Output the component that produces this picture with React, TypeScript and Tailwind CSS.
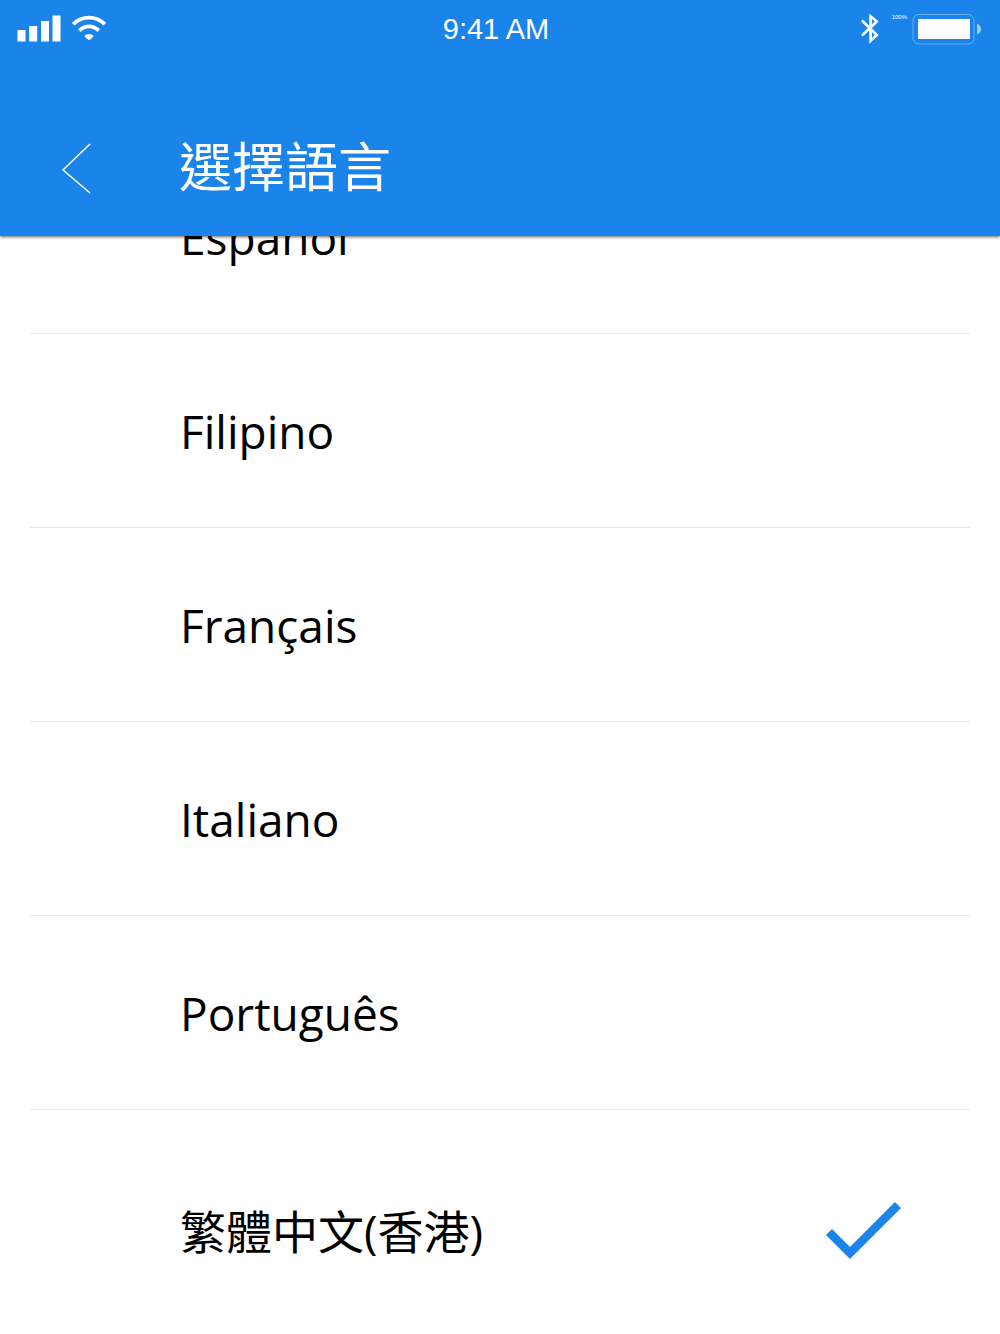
import { useState } from 'react';

const LANGUAGES = [
  { code: 'es', label: 'Español' },
  { code: 'fil', label: 'Filipino' },
  { code: 'fr', label: 'Français' },
  { code: 'it', label: 'Italiano' },
  { code: 'pt', label: 'Português' },
  { code: 'zh-HK', label: '繁體中文(香港)' }
];

function SignalIcon() {
  return (
    <svg width="44" height="27" viewBox="0 0 44 27" fill="currentColor" aria-hidden="true">
      <path d="M0.500 15h8v11.500h-8zM12.200 11h8v15.500h-8zM24 6h8v20.500h-8zM35.500 0.500h8v26h-8z" />
    </svg>
  );
}

function WifiIcon() {
  return (
    <svg width="34" height="27" viewBox="0 0 34 27" fill="none" stroke="currentColor" aria-hidden="true">
      <path d="M1.300 9.200C10 0.500 24 0.500 32.700 9.200" strokeWidth="3.800" />
      <path d="M7.300 15.700C13 10 21 10 26.700 15.700" strokeWidth="3.800" />
      <path d="M12.300 20.700Q17 17.200 21.700 20.700Q20.500 23 17 25.300Q13.500 23 12.300 20.700Z" fill="currentColor" stroke="none" />
    </svg>
  );
}

function BluetoothIcon() {
  return (
    <svg width="18" height="32" viewBox="0 0 18 32" fill="none" stroke="currentColor" strokeWidth="2.600" aria-hidden="true">
      <path d="M1 7.500L15.800 22L9.600 27.800V3.200L15.800 8.500L1 22.500" />
    </svg>
  );
}

function BatteryIcon() {
  return (
    <svg width="69" height="31" viewBox="0 0 69 31" aria-hidden="true">
      <rect x="1" y="0.500" width="61" height="29.500" rx="6" fill="none" stroke="white" strokeOpacity="0.350" />
      <rect x="6" y="5" width="52" height="20" fill="white" />
      <path d="M65 9.500Q69 11.500 69 15T65 20.500Z" fill="white" fillOpacity="0.600" />
    </svg>
  );
}

function StatusBar() {
  return (
    <div className="grid h-[58px] grid-cols-3 items-center pr-[19px] pl-[17px]">
      <div className="flex items-center gap-[11px] pb-[2px]">
        <SignalIcon />
        <WifiIcon />
      </div>
      <div className="pr-[6px] text-center font-['Liberation_Sans',Arial,sans-serif] text-[29px] leading-8">9:41 AM</div>
      <div className="flex items-center justify-end">
        <BluetoothIcon />
        <span className="mr-[5px] ml-[13px] self-start font-['Liberation_Sans',Arial,sans-serif] text-[6px] leading-[8px]">
          100%
        </span>
        <BatteryIcon />
      </div>
    </div>
  );
}

export default function App() {
  const [selected, setSelected] = useState('zh-HK');

  return (
    <div className="flex h-screen flex-col overflow-hidden bg-white font-['Open_Sans','Noto_Sans_CJK_TC',sans-serif] text-black">
      <header className="relative z-10 h-[236px] shrink-0 bg-[#1a84ea] text-white shadow-[0_1px_3px_rgba(0,0,0,0.6)]">
        <StatusBar />
        <div className="flex items-center pt-[68px] pl-[60px]">
          <button type="button" aria-label="返回" className="mr-[87px] pt-[10px]">
            <svg width="32" height="52" viewBox="0 0 32 52" fill="none" stroke="currentColor" strokeWidth="1.500" aria-hidden="true">
              <path d="M30 1L3 27L30 50" />
            </svg>
          </button>
          <h1 className="font-['Noto_Sans_CJK_TC',sans-serif] text-[53px] leading-[76px]">選擇語言</h1>
        </div>
      </header>

      <main className="min-h-0 flex-1 overflow-hidden">
        <ul className="-mt-24 px-[30px]">
          {LANGUAGES.map((lang) => (
            <li key={lang.code} className="border-b border-[#e8e8e8] last:border-b-0 last:pt-6">
              <button
                type="button"
                aria-pressed={selected === lang.code}
                onClick={() => setSelected(lang.code)}
                className="flex h-[193px] w-full items-center justify-between pr-[66px] pl-[150px] text-left text-[46px] leading-[64px]"
              >
                {lang.label}
                {selected === lang.code && (
                  <svg width="78" height="60" viewBox="0 0 78 60" fill="none" stroke="#1a84ea" strokeWidth="8.500" aria-hidden="true">
                    <path d="M3 31L24 52L72 4" />
                  </svg>
                )}
              </button>
            </li>
          ))}
        </ul>
      </main>
    </div>
  );
}
